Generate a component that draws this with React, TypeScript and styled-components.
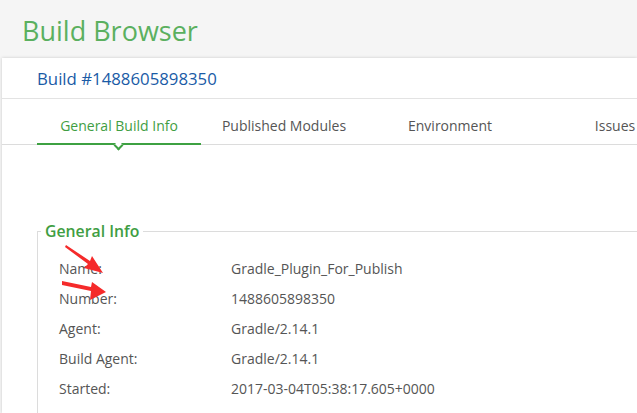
import React from "react";
import styled, { createGlobalStyle } from "styled-components";

const Global = createGlobalStyle`
  html, body { margin: 0; padding: 0; }
  body {
    background: #f5f5f5;
    font-family: "Open Sans", "Noto Sans", sans-serif;
    overflow: hidden;
    width: 637px;
    height: 413px;
  }
`;

const Page = styled.div`
  position: relative;
  width: 637px;
  height: 413px;
  overflow: hidden;
  display: flex;
  flex-direction: column;
`;

const TopBar = styled.header`
  flex: none;
  height: 58px;
  display: flex;
  align-items: center;
  padding-left: 22px;
  box-sizing: border-box;
`;

const Title = styled.h1`
  margin: 0;
  font-weight: 400;
  font-size: 27px;
  color: #5bb05f;
  line-height: 1;
  position: relative;
  top: 1px;
`;

const Card = styled.section`
  flex: 1;
  min-height: 0;
  overflow: hidden;
  margin-left: 2px;
  background: #fff;
  box-shadow: 0 0 3px rgba(0, 0, 0, 0.18);
  display: flex;
  flex-direction: column;
`;

const CardHeader = styled.div`
  flex: none;
  height: 40px;
  display: flex;
  align-items: center;
  padding-left: 35px;
  border-bottom: 1px solid #e3e3e3;
`;

const BuildTitle = styled.h2`
  margin: 0;
  font-weight: 400;
  font-size: 16.8px;
  color: #1a5ba6;
`;

const Tabs = styled.nav`
  flex: none;
  height: 45px;
  display: flex;
  align-items: stretch;
  padding-left: 35px;
  border-bottom: 1px solid #dcdcdc;
`;

const Tab = styled.div<{ $active?: boolean; $width: number }>`
  position: relative;
  width: ${(p) => p.$width}px;
  flex: none;
  display: flex;
  align-items: center;
  justify-content: center;
  font-size: 14px;
  color: ${(p) => (p.$active ? "#3f9e43" : "#555")};
  padding-top: 7px;
  box-sizing: border-box;
  white-space: nowrap;
  ${(p) =>
    p.$active
      ? `
    &::after {
      content: "";
      position: absolute;
      left: 0; right: 0; bottom: -1px;
      height: 2px;
      background: #3ea142;
    }
    &::before {
      content: "";
      position: absolute;
      left: 50%;
      bottom: -5px;
      width: 7px;
      height: 7px;
      margin-left: -4px;
      background: #fff;
      border-right: 2px solid #3ea142;
      border-bottom: 2px solid #3ea142;
      transform: rotate(45deg);
      box-sizing: border-box;
      z-index: 1;
    }
  `
      : ""}
`;

const Body = styled.div`
  flex: none;
  padding: 76px 0 0 35px;
`;

const Fieldset = styled.fieldset`
  margin: 0;
  padding: 0;
  border: 1px solid #dcdcdc;
  border-right: none;
  border-bottom: none;
  min-width: 0;
`;

const Legend = styled.legend`
  padding: 0 4px;
  margin-left: 3px;
  font-size: 15.8px;
  font-weight: 600;
  color: #3f9e43;
  line-height: 20px;
`;

const Grid = styled.div`
  display: grid;
  grid-template-columns: 172px 1fr;
  grid-auto-rows: 30px;
  align-items: center;
  padding: 12px 0 0 21px;
  font-size: 14px;
  color: #555;
`;

const Label = styled.div``;
const Value = styled.div``;

const Annotations = styled.svg`
  position: absolute;
  left: 0;
  top: 0;
  pointer-events: none;
`;

const rows: [string, string][] = [
  ["Name:", "Gradle_Plugin_For_Publish"],
  ["Number:", "1488605898350"],
  ["Agent:", "Gradle/2.14.1"],
  ["Build Agent:", "Gradle/2.14.1"],
  ["Started:", "2017-03-04T05:38:17.605+0000"],
  ["Duration:", "1.9 seconds"],
];

const tabs = [
  { label: "General Build Info", width: 164, active: true },
  { label: "Published Modules", width: 166 },
  { label: "Environment", width: 166 },
  { label: "Issues", width: 164 },
];

export default function App() {
  return (
    <Page>
      <Global />
      <TopBar>
        <Title>Build Browser</Title>
      </TopBar>
      <Card>
        <CardHeader>
          <BuildTitle>Build #1488605898350</BuildTitle>
        </CardHeader>
        <Tabs>
          {tabs.map((t) => (
            <Tab key={t.label} $active={t.active} $width={t.width}>
              {t.label}
            </Tab>
          ))}
        </Tabs>
        <Body>
          <Fieldset>
            <Legend>General Info</Legend>
            <Grid>
              {rows.map(([k, v]) => (
                <React.Fragment key={k}>
                  <Label>{k}</Label>
                  <Value>{v}</Value>
                </React.Fragment>
              ))}
            </Grid>
          </Fieldset>
        </Body>
      </Card>
      <Annotations width="637" height="413" viewBox="0 0 637 413">
        <path d="M66 245 L90 261 L92 256 L103 273 L84 268 L88 264 L65 247 Z" fill="#f52a2a" />
        <path d="M62 281 L91 287 L92 282 L106 292 L90 300 L91 291 L62 285 Z" fill="#f52a2a" />
      </Annotations>
    </Page>
  );
}
